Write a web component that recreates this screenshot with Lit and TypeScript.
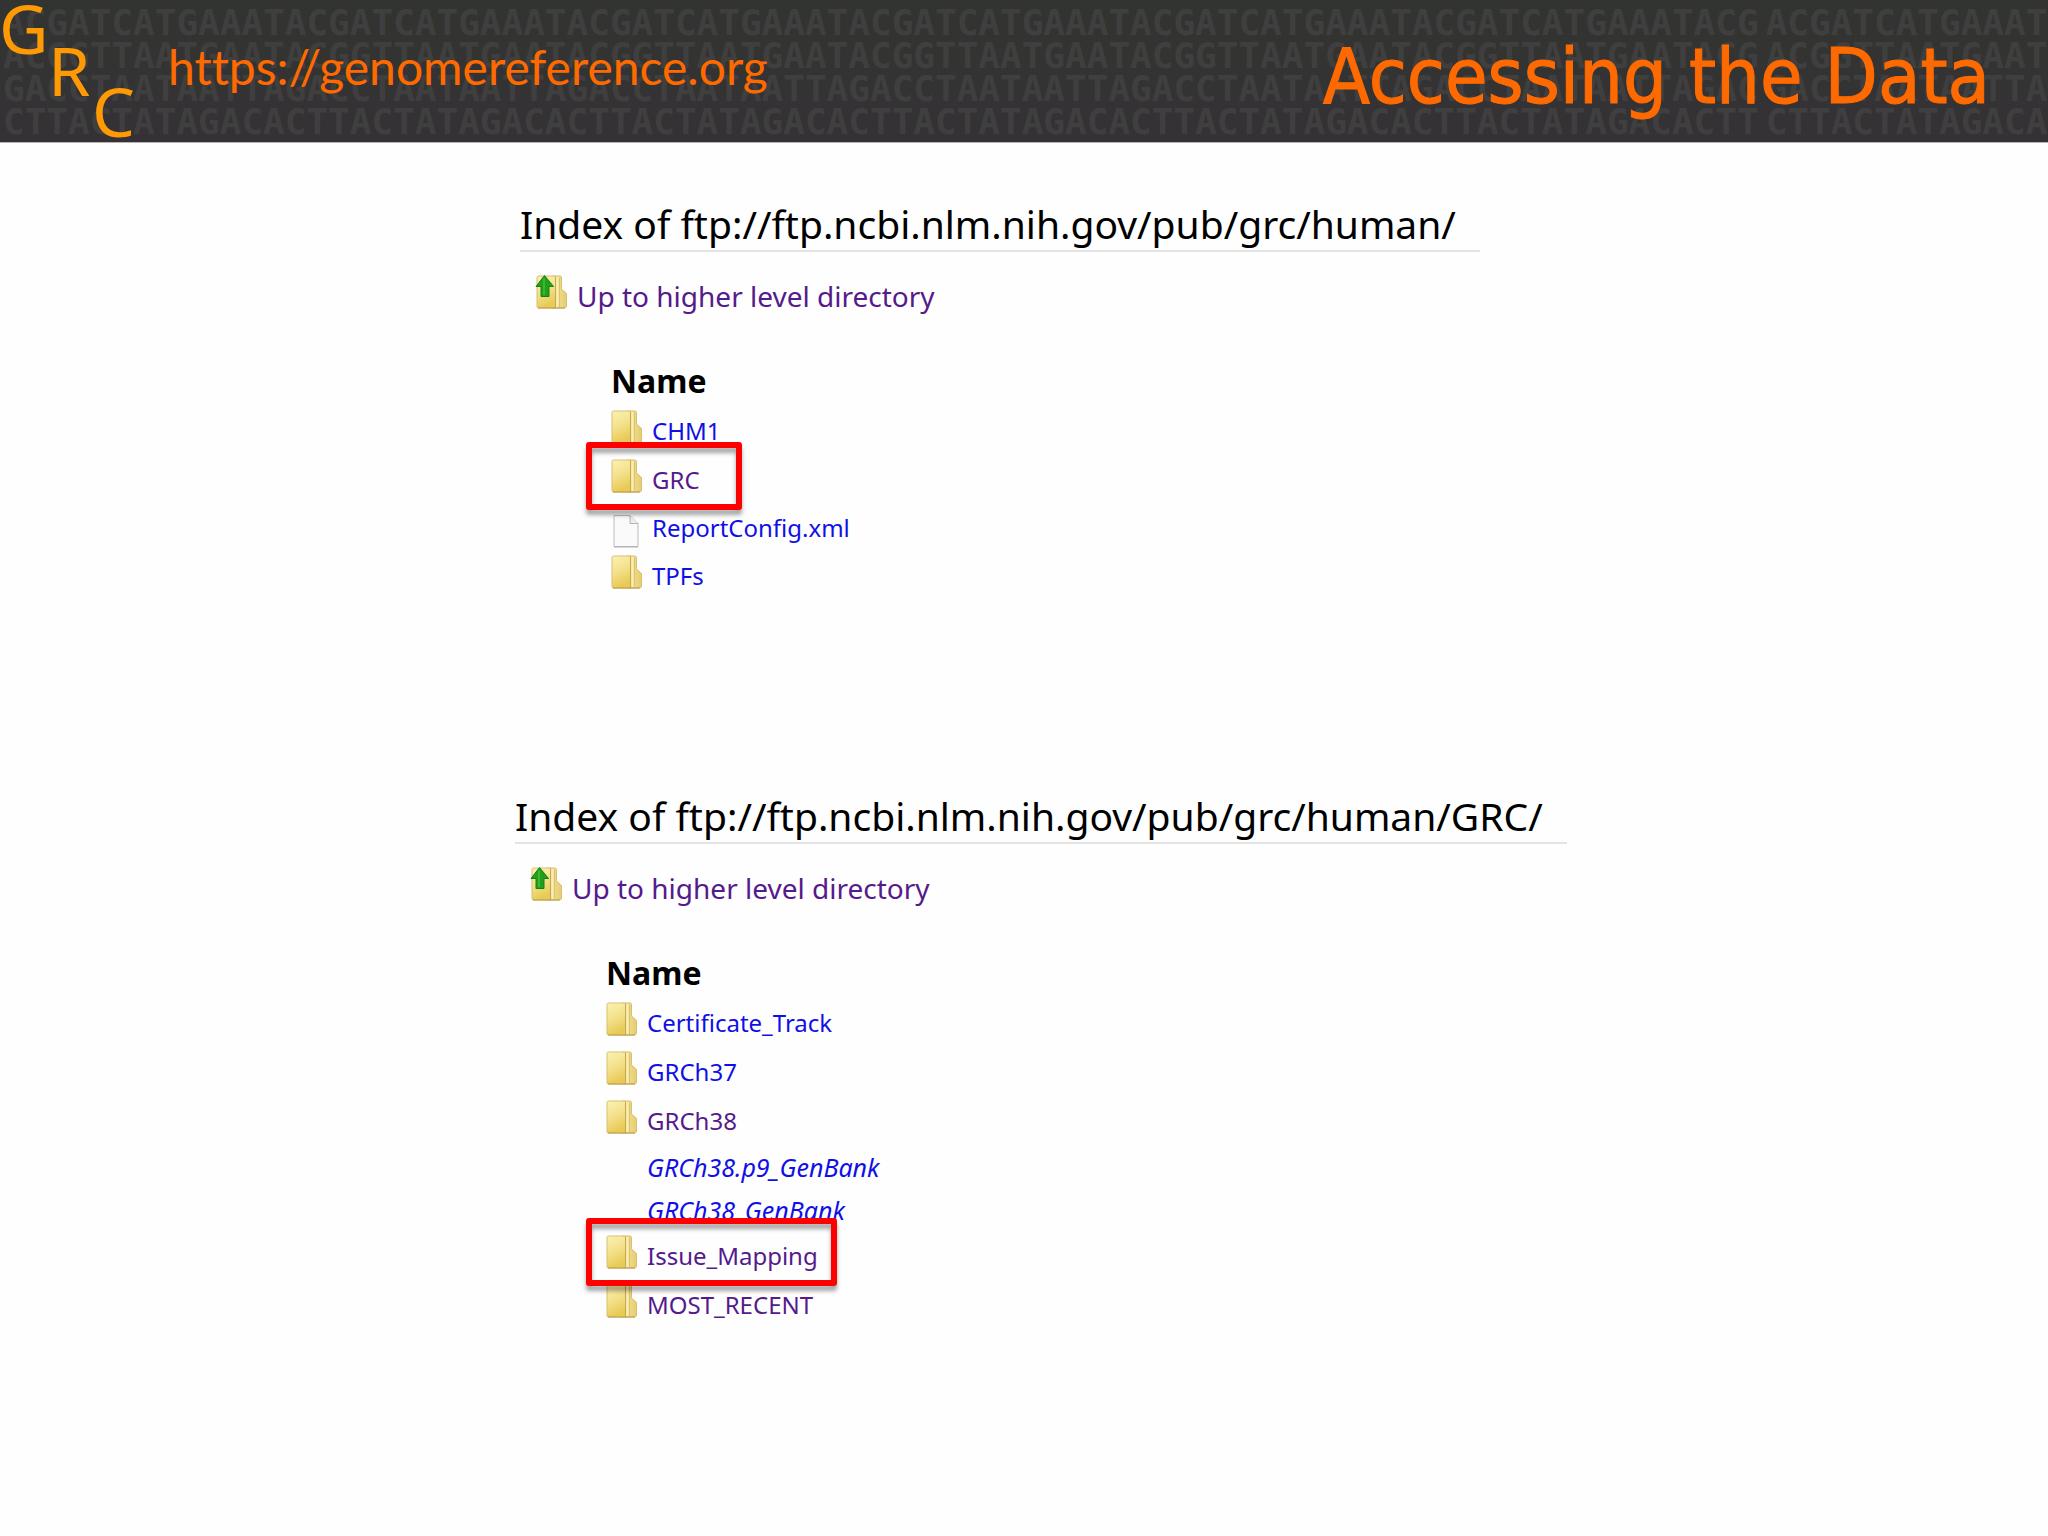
import { LitElement, html, svg, css, nothing } from "lit";
import { customElement, property } from "lit/decorators.js";

type Kind = "folder" | "file" | "link";

interface Entry {
  name: string;
  kind: Kind;
  visited?: boolean;
  /** Red frame drawn round the entry: overhang on the left and width, in pixels. */
  frame?: { overhang: number; width: number };
}

const SEQUENCE = ["ACGATCATGAAAT", "ACGGTTAATGAAT", "GACCTAATAATTA", "CTTACTATAGACA"];

const HUMAN: Entry[] = [
  { name: "CHM1", kind: "folder" },
  { name: "GRC", kind: "folder", visited: true, frame: { overhang: 25, width: 156 } },
  { name: "ReportConfig.xml", kind: "file" },
  { name: "TPFs", kind: "folder" },
];

const GRC: Entry[] = [
  { name: "Certificate_Track", kind: "folder" },
  { name: "GRCh37", kind: "folder" },
  { name: "GRCh38", kind: "folder", visited: true },
  { name: "GRCh38.p9_GenBank", kind: "link" },
  { name: "GRCh38_GenBank", kind: "link" },
  { name: "Issue_Mapping", kind: "folder", visited: true, frame: { overhang: 20, width: 251 } },
  { name: "MOST_RECENT", kind: "folder", visited: true },
];

const folderShape = svg`
  <defs>
    <linearGradient id="front" x1="0" y1="0" x2="0.3" y2="1">
      <stop offset="0" stop-color="#fbf3b4"></stop>
      <stop offset="0.55" stop-color="#f3e08a"></stop>
      <stop offset="1" stop-color="#e8ca55"></stop>
    </linearGradient>
    <linearGradient id="back" x1="0" y1="0" x2="1" y2="0">
      <stop offset="0" stop-color="#f6e9a0"></stop>
      <stop offset="1" stop-color="#e6cc70"></stop>
    </linearGradient>
  </defs>
  <path d="M16 1H24Q25.500 1 25.500 3V14L30.500 18.500V31Q30.500 33 28 33H16Z" fill="url(#back)" stroke="#d8c070"></path>
  <path d="M2.500 1H19.500V33H2.500Q1 33 1 31.500V2.500Q1 1 2.500 1Z" fill="url(#front)" stroke="#d8c070"></path>
  <path d="M19.500 2V33" stroke="#c9a94b" fill="none"></path>
  <path d="M21.500 2V32" stroke="#f8eebb" stroke-width="2" fill="none"></path>
  <path d="M23.500 3V32" stroke="#dcc26a" fill="none"></path>
  <path d="M2 33H29" stroke="#b99c46" fill="none"></path>`;

const folderIcon = html`<svg class="icon" viewBox="0 0 31 34" aria-hidden="true">${folderShape}</svg>`;

const upIcon = html`<svg class="icon" viewBox="0 0 31 34" aria-hidden="true">
  ${folderShape}
  <path d="M8.500 0.500L17.500 11.500H13V21.500H5V11.500H0Z" fill="#22a01c" stroke="#128212" stroke-linejoin="round"></path>
  <path d="M8 3.500V20" stroke="#3fb534" stroke-width="2" fill="none"></path>
</svg>`;

const fileIcon = html`<svg class="icon file" viewBox="0 0 31 34" aria-hidden="true">
  <path d="M3 1.500H19L27 9.500V32.500H3Z" fill="#fafafb" stroke="#bdbdc0"></path>
  <path d="M19 1.500V9.500H27" fill="#ececee" stroke="#b4b4b8"></path>
  <path d="M3 33H27" stroke="#adadb0"></path>
</svg>`;

@customElement("directory-index")
class DirectoryIndex extends LitElement {
  @property() path = "";
  @property({ attribute: false }) entries: Entry[] = [];

  static styles = css`
    :host {
      display: block;
      width: max-content;
    }
    .title {
      margin: 0;
      padding-right: 24px;
      border-bottom: 2px solid #e3e3e3;
      color: #000;
      font-size: 39px;
      font-weight: 400;
      line-height: 52px;
      white-space: nowrap;
    }
    a {
      color: #1010e6;
      text-decoration: none;
    }
    a.visited {
      color: #551a8b;
    }
    .up {
      display: flex;
      align-items: center;
      gap: 10px;
      margin: 23px 0 44px 16px;
      font-size: 28px;
      line-height: 40px;
    }
    .icon {
      flex: none;
      width: 31px;
      height: 34px;
      margin-bottom: 8px;
      overflow: visible;
    }
    .file {
      margin: 6px 0 0;
    }
    .blank {
      flex: none;
      width: 31px;
    }
    .list {
      margin-left: 91px;
      border-collapse: collapse;
      font-size: 24px;
    }
    th {
      padding: 0 0 5px;
      color: #000;
      font-size: 32px;
      font-weight: 700;
      line-height: 40px;
      text-align: left;
    }
    td {
      padding: 0;
    }
    .entry {
      position: relative;
      display: flex;
      align-items: center;
      gap: 10px;
      height: 49px;
      line-height: 34px;
    }
    .entry.file-row {
      height: 47px;
    }
    .entry.link-row {
      height: 43px;
      font-size: 25px;
      font-style: italic;
    }
    .frame {
      position: absolute;
      z-index: 1;
      top: -13px;
      box-sizing: border-box;
      height: 68px;
      border: 6px solid #fe0000;
      border-radius: 3px;
      filter: drop-shadow(0 5px 2px rgba(0, 0, 0, 0.35));
      pointer-events: none;
    }
  `;

  private icon(kind: Kind) {
    if (kind === "folder") return folderIcon;
    if (kind === "file") return fileIcon;
    return html`<span class="blank"></span>`;
  }

  render() {
    return html`
      <h2 class="title">Index of ${this.path}</h2>
      <a class="up visited" href="#">${upIcon}<span>Up to higher level directory</span></a>
      <table class="list">
        <thead>
          <tr><th scope="col">Name</th></tr>
        </thead>
        <tbody>
          ${this.entries.map(
            (e) => html`<tr>
              <td>
                <div class="entry ${e.kind}-row">
                  ${this.icon(e.kind)}<a class=${e.visited ? "visited" : "fresh"} href="#">${e.name}</a>
                  ${e.frame
                    ? html`<span class="frame" style="left:${-e.frame.overhang}px;width:${e.frame.width}px"></span>`
                    : nothing}
                </div>
              </td>
            </tr>`
          )}
        </tbody>
      </table>
    `;
  }
}

@customElement("app-root")
class AppRoot extends LitElement {
  static styles = css`
    :host {
      display: block;
      min-height: 100vh;
      background: #fefefe;
      font-family: "Noto Sans", "Open Sans", sans-serif;
    }
    .banner {
      position: relative;
      display: flex;
      align-items: center;
      height: 143px;
      overflow: hidden;
      background: linear-gradient(#323431, #343333 55%, #353136);
      border-bottom: 1px solid #b5b3b5;
      box-sizing: border-box;
    }
    .sequence {
      position: absolute;
      inset: 0;
      display: flex;
      padding: 6px 3px;
      color: #403f3f;
      font: 700 36px/33px "DejaVu Sans Mono", monospace;
    }
    .tile {
      flex: none;
    }
    .tile.partial {
      margin-right: 7px;
    }
    .row {
      display: block;
    }
    .logo {
      position: relative;
      flex: none;
      width: 140px;
      height: 142px;
      fill: #ff9a05;
      font-size: 68px;
    }
    .site {
      position: relative;
      margin: 0 auto 8px 28px;
      color: #ff6a00;
      font: 400 48px/56px Lato, sans-serif;
      font-variant-ligatures: none;
      text-decoration: none;
    }
    .heading {
      position: relative;
      margin: 0 58px 0 0;
      padding-top: 12px;
      color: #ff6a00;
      font: 400 77px/96px "DejaVu Sans Condensed", "DejaVu Sans", sans-serif;
      -webkit-text-stroke: 1px #ff6a00;
      white-space: nowrap;
    }
    .content {
      display: flex;
      flex-direction: column;
      gap: 190px;
      padding: 55px 40px 80px 515px;
    }
    .first {
      margin-left: 5px;
    }
  `;

  private tile(letters = 13) {
    return html`<div class="tile ${letters < 13 ? "partial" : "full"}">
      ${SEQUENCE.map((s) => html`<span class="row">${s.slice(0, letters)}</span>`)}
    </div>`;
  }

  render() {
    return html`
      <header class="banner">
        <div class="sequence" aria-hidden="true">
          ${Array.from({ length: 6 }, () => this.tile())}${this.tile(3)}${this.tile()}
        </div>
        <svg class="logo" viewBox="0 0 140 142" role="img" aria-label="GRC">
          <text x="-1" y="54">G</text>
          <text x="48" y="96">R</text>
          <text x="92" y="137">C</text>
        </svg>
        <a class="site" href="https://genomereference.org">https://genomereference.org</a>
        <h1 class="heading">Accessing the Data</h1>
      </header>
      <main class="content">
        <directory-index class="first" path="ftp://ftp.ncbi.nlm.nih.gov/pub/grc/human/" .entries=${HUMAN}></directory-index>
        <directory-index path="ftp://ftp.ncbi.nlm.nih.gov/pub/grc/human/GRC/" .entries=${GRC}></directory-index>
      </main>
    `;
  }
}
